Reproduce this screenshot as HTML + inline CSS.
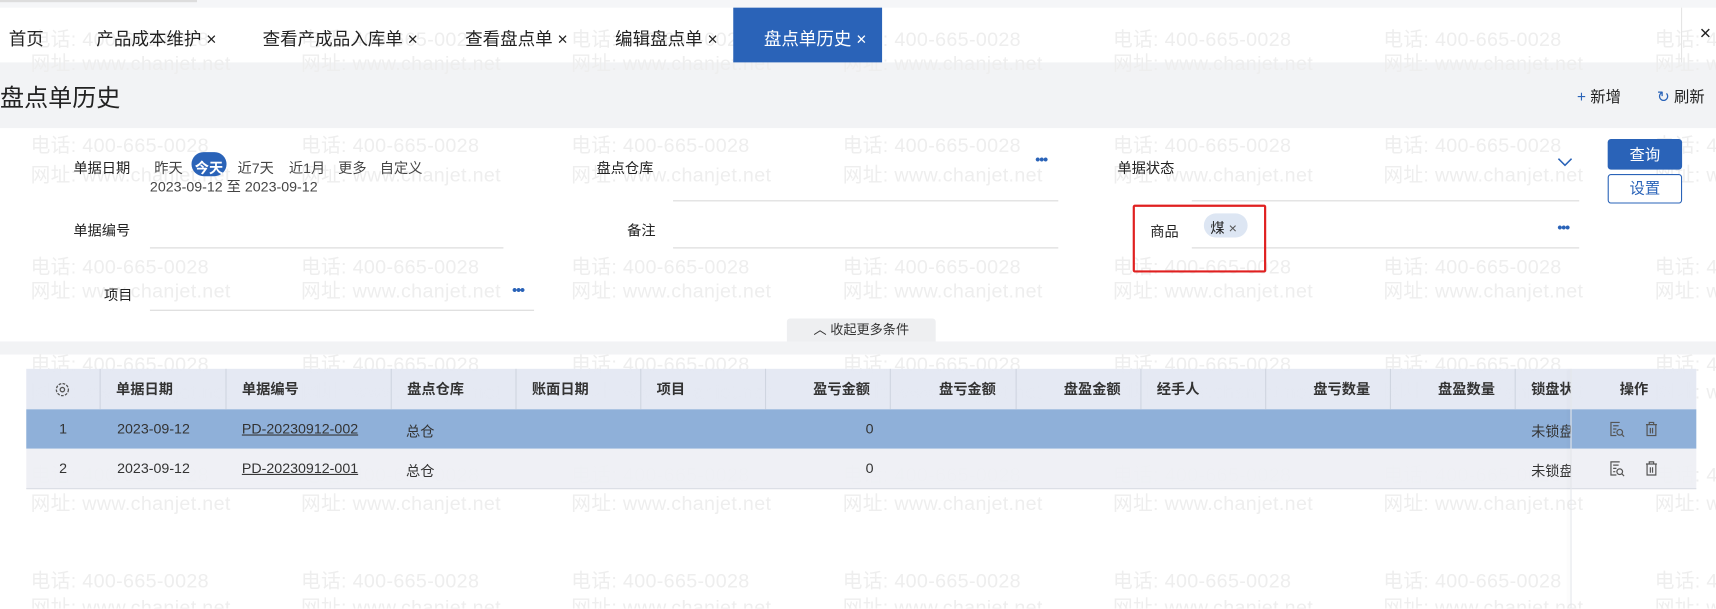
<!DOCTYPE html>
<html><head><meta charset="utf-8">
<style>
html,body{margin:0;padding:0;width:1716px;height:608px;overflow:hidden;background:#fff}
#w{position:absolute;left:0;top:0;width:1568px;height:556px;overflow:hidden;transform:scale(1.0944);transform-origin:0 0;font-family:"Liberation Sans","Noto Sans CJK SC",sans-serif;color:#222;font-size:14px}
.a{position:absolute;white-space:nowrap}
.wm{position:absolute;color:#eeeeee;font-size:18px;white-space:nowrap;letter-spacing:0.3px;z-index:0;font-family:"Liberation Sans Narrow","Liberation Sans","Noto Sans CJK SC",sans-serif}
.ul{position:absolute;height:1px;background:#d9d9d9}
.dots{position:absolute;color:#2a63b8;font-weight:bold;font-size:13px;letter-spacing:-1px}
.th{position:absolute;top:337px;height:37px;line-height:37px;font-weight:bold;font-size:13px;color:#333;white-space:nowrap}
.td{position:absolute;font-size:13px;color:#333;white-space:nowrap}
.vl{position:absolute;top:337px;height:37px;width:1px;background:#cfd5e0}
.z{z-index:2}
</style></head><body><div id="w">
<div class="a" style="left:0;top:0;width:1568px;height:7px;background:#f5f6f8"></div>
<div class="a" style="left:0;top:0;width:180px;height:2px;background:#ddd"></div>
<div class="a" style="left:0;top:57px;width:1568px;height:60px;background:#f2f3f5"></div>
<div class="a" style="left:0;top:312px;width:1568px;height:12px;background:#f2f3f5"></div>

<div id="wmc"></div>
<script>
var ys=[[33,55],[130,157],[241,263],[330,355],[431,457],[528,552]];
var xs=[28,275,522,770,1017,1264,1512];var h="";
ys.forEach(function(p){xs.forEach(function(x){h+='<div class="wm" style="left:'+x+'px;top:'+(p[0]-11)+'px">电话: 400-665-0028</div><div class="wm" style="left:'+x+'px;top:'+(p[1]-11)+'px">网址: www.chanjet.net</div>';});});
document.getElementById('wmc').innerHTML=h;
</script>

<div class="a z" style="left:8px;top:22px;font-size:16px">首页</div>
<div class="a z" style="left:88px;top:22px;font-size:16px">产品成本维护 ×</div>
<div class="a z" style="left:240px;top:22px;font-size:16px">查看产成品入库单 ×</div>
<div class="a z" style="left:425px;top:22px;font-size:16px">查看盘点单 ×</div>
<div class="a z" style="left:562px;top:22px;font-size:16px">编辑盘点单 ×</div>
<div class="a z" style="left:670px;top:7px;width:136px;height:50px;background:#2a63b8"></div>
<div class="a z" style="left:698px;top:22px;font-size:16px;color:#fff">盘点单历史 ×</div>
<div class="a z" style="left:1536px;top:7px;width:1px;height:50px;background:#e5e5e5"></div>
<div class="a z" style="left:1553px;top:20px;font-size:18px">×</div>

<div class="a z" style="left:0;top:72px;font-size:22px">盘点单历史</div>
<div class="a z" style="left:1441px;top:78px;font-size:14px"><span style="color:#2a63b8">+</span> 新增</div>
<div class="a z" style="left:1514px;top:78px;font-size:14px"><span style="color:#2a63b8">↻</span> 刷新</div>

<div class="a z" style="left:67px;top:143px;font-size:13px">单据日期</div>
<div class="a z" style="left:141px;top:143px;font-size:13px;color:#444">昨天</div>
<div class="a z" style="left:175px;top:139px;width:32px;height:22px;border-radius:11px;background:#2a63b8"></div>
<div class="a z" style="left:178px;top:143px;font-size:13px;color:#fff;font-weight:bold">今天</div>
<div class="a z" style="left:217px;top:143px;font-size:13px;color:#444">近7天</div>
<div class="a z" style="left:264px;top:143px;font-size:13px;color:#444">近1月</div>
<div class="a z" style="left:309px;top:143px;font-size:13px;color:#444">更多</div>
<div class="a z" style="left:347px;top:143px;font-size:13px;color:#444">自定义</div>
<div class="a z" style="left:137px;top:160px;font-size:13px;color:#444">2023-09-12 至 2023-09-12</div>

<div class="a z" style="left:545px;top:143px;font-size:13px">盘点仓库</div>
<div class="ul" style="left:615px;top:183px;width:352px"></div>
<div class="dots" style="left:946px;top:138px">•••</div>
<div class="a z" style="left:1021px;top:143px;font-size:13px">单据状态</div>
<div class="ul" style="left:1089px;top:183px;width:354px"></div>
<svg class="a" style="left:1422px;top:142px" width="16" height="12"><path d="M2 3 L8 9 L14 3" fill="none" stroke="#2a63b8" stroke-width="1.4"/></svg>
<div class="a z" style="left:1469px;top:127px;width:68px;height:28px;background:#2a63b8;border-radius:3px;color:#fff;font-size:14px;line-height:28px;text-align:center">查询</div>
<div class="a z" style="left:1469px;top:159px;width:66px;height:25px;border:1px solid #2a63b8;border-radius:3px;color:#2a63b8;font-size:14px;line-height:25px;text-align:center;background:#fff">设置</div>

<div class="a z" style="left:67px;top:200px;font-size:13px">单据编号</div>
<div class="ul" style="left:137px;top:226px;width:323px"></div>
<div class="a z" style="left:573px;top:200px;font-size:13px">备注</div>
<div class="ul" style="left:615px;top:226px;width:352px"></div>
<div class="a z" style="left:1051px;top:201px;font-size:13px">商品</div>
<div class="a z" style="left:1100px;top:195px;width:40px;height:22px;border-radius:11px;background:#dde6f3"></div>
<div class="a z" style="left:1106px;top:198px;font-size:13px">煤 <span style="color:#555">×</span></div>
<div class="dots" style="left:1423px;top:200px">•••</div>
<div class="ul" style="left:1089px;top:226px;width:354px"></div>
<div class="a z" style="left:1035px;top:187px;width:118px;height:58px;border:2px solid #e02020;border-radius:2px"></div>

<div class="a z" style="left:95px;top:259px;font-size:13px">项目</div>
<div class="ul" style="left:137px;top:283px;width:351px"></div>
<div class="dots" style="left:468px;top:257px">•••</div>

<div class="a z" style="left:719px;top:291px;width:136px;height:21px;background:#eeeff1;border-radius:3px 3px 0 0;font-size:12px;line-height:21px;text-align:center;color:#333">︿ 收起更多条件</div>

<div class="a" style="left:24px;top:337px;width:1526px;height:37px;background:#e4e8f2;opacity:.95;z-index:1"></div>
<div class="a" style="left:24px;top:374px;width:1526px;height:36px;background:#8fb0d9;z-index:1"></div>
<div class="a" style="left:24px;top:410px;width:1526px;height:36px;background:#eff0f5;opacity:.95;z-index:1;border-bottom:1px solid #d8dce4"></div>
<div class="a" style="left:1435px;top:337px;width:1px;height:219px;background:#e4e6ea;box-shadow:-2px 0 3px rgba(0,0,0,.06);z-index:3"></div>
<div id="tb"></div>
<script>
var cols=[[24,91,'',0],[91,206,'单据日期',0],[206,357,'单据编号',0],[357,471,'盘点仓库',0],[471,585,'账面日期',0],[585,699,'项目',0],[699,813,'盈亏金额',1],[813,928,'盘亏金额',1],[928,1042,'盘盈金额',1],[1042,1156,'经手人',0],[1156,1270,'盘亏数量',1],[1270,1384,'盘盈数量',1],[1384,1435,'锁盘状',0]];
var s="";
cols.forEach(function(c,i){
 if(i>0) s+='<div class="vl z" style="left:'+c[0]+'px"></div>';
 if(c[2]){ if(c[3]) s+='<div class="th z" style="left:'+c[0]+'px;width:'+(c[1]-c[0]-18)+'px;text-align:right">'+c[2]+'</div>';
 else s+='<div class="th z" style="left:'+(c[0]+15)+'px;max-width:'+(c[1]-c[0]-15)+'px;overflow:hidden">'+c[2]+'</div>';}
});
s+='<svg class="a z" style="left:50px;top:349px" width="14" height="14"><circle cx="7" cy="7" r="5.5" fill="none" stroke="#555" stroke-width="1.2" stroke-dasharray="2.5 1.2"/><circle cx="7" cy="7" r="2" fill="none" stroke="#555" stroke-width="1.2"/></svg>';
s+='<div class="th z" style="left:1480px">操作</div>';
[[374,'1','PD-20230912-002'],[410,'2','PD-20230912-001']].forEach(function(r){
 var t=r[0]+10;
 s+='<div class="td z" style="left:54px;top:'+t+'px">'+r[1]+'</div>';
 s+='<div class="td z" style="left:107px;top:'+t+'px">2023-09-12</div>';
 s+='<div class="td z" style="left:221px;top:'+t+'px;text-decoration:underline">'+r[2]+'</div>';
 s+='<div class="td z" style="left:371px;top:'+t+'px">总仓</div>';
 s+='<div class="td z" style="left:791px;top:'+t+'px">0</div>';
 s+='<div class="td z" style="left:1399px;top:'+t+'px;width:36px;overflow:hidden">未锁盘</div>';
 s+='<svg class="a z" style="left:1469px;top:'+(r[0]+10)+'px" width="16" height="16"><path d="M11 2H3v12h5M5 5h5M5 8h3M5 11h2" fill="none" stroke="#555" stroke-width="1.1"/><circle cx="11" cy="11" r="2.6" fill="none" stroke="#555" stroke-width="1.1"/><path d="M13 13l2 2" stroke="#555" stroke-width="1.1"/></svg>';
 s+='<svg class="a z" style="left:1501px;top:'+(r[0]+10)+'px" width="16" height="16"><path d="M3 4h10M6 4V2h4v2M4 4v10h8V4M7 7v5M9 7v5" fill="none" stroke="#555" stroke-width="1.1"/></svg>';
});
document.getElementById('tb').innerHTML=s;
</script>
</div></body></html>
